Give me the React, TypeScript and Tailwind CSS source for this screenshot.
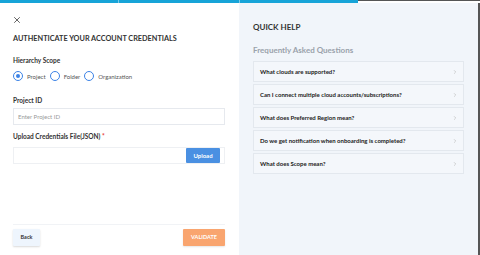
import { X, ChevronRight } from 'lucide-react';

const faqs = [
    'What clouds are supported?',
    'Can I connect multiple cloud accounts/subscriptions?',
    'What does Preferred Region mean?',
    'Do we get notification when onboarding is completed?',
    'What does Scope mean?',
];

function Radio({ label, checked }: { label: string; checked?: boolean }) {
    return (
        <label className="flex items-center gap-[4px]">
            <span className="w-[10px] h-[10px] rounded-full border-[1.5px] border-[#3b82e6] flex items-center justify-center">
                {checked && <span className="w-[4px] h-[4px] rounded-full bg-[#3b82e6]" />}
            </span>
            <span className="text-[6px] text-[#555]">{label}</span>
        </label>
    );
}

export default function App() {
    return (
        <div
            className="w-[480px] h-[255px] flex flex-col overflow-hidden bg-white"
            style={{ fontFamily: 'Lato, "Open Sans", sans-serif' }}
        >
            {/* progress bar */}
            <div className="h-[3px] flex shrink-0">
                <div className="w-[118px] bg-[#17a4d8]" />
                <div className="w-[1px] bg-[#7cc9e8]" />
                <div className="w-[120px] bg-[#17a4d8]" />
                <div className="w-[1px] bg-[#7cc9e8]" />
                <div className="w-[118px] bg-[#17a4d8]" />
                <div className="flex-1 border-t border-[#555] bg-white" />
            </div>

            <div className="flex flex-1 min-h-0">
                {/* left panel */}
                <div className="w-[239px] flex flex-col px-[13px] pb-[9px] text-[#333]">
                    <X className="mt-[12px] w-[10px] h-[10px] -ml-[1px] text-[#444]" strokeWidth={2} />
                    <h1 className="mt-[9px] text-[7.3px] leading-[10px] font-bold text-[#333]">
                        AUTHENTICATE YOUR ACCOUNT CREDENTIALS
                    </h1>
                    <div className="mt-[12px] text-[6.5px] leading-[10px] font-bold">Hierarchy Scope</div>
                    <div className="mt-[5px] flex items-center gap-[4px]">
                        <Radio label="Project" checked />
                        <Radio label="Folder" />
                        <Radio label="Organization" />
                    </div>
                    <div className="mt-[15px] text-[6.5px] leading-[10px] font-bold">Project ID</div>
                    <input
                        placeholder="Enter Project ID"
                        className="mt-[2px] w-[212px] h-[17px] border border-[#e6e9ee] px-[4px] text-[6px] placeholder-[#999] outline-none"
                    />
                    <div className="mt-[7px] text-[6.5px] leading-[10px] font-bold">
                        Upload Credentials File(JSON) <span className="text-[#e53935]">*</span>
                    </div>
                    <div className="mt-[5px] w-[212px] h-[17px] border border-[#eef0f3] flex justify-between pr-[4px]">
                        <div className="flex-1" />
                        <button className="w-[34px] h-full bg-[#4a90e2] text-white text-[6px] font-bold rounded-[1px]">
                            Upload
                        </button>
                    </div>

                    <div className="mt-auto w-[212px] border-t border-[#f1f3f6]" />
                    <div className="mt-[4px] w-[212px] flex justify-between">
                        <button className="w-[27px] h-[17px] bg-[#eef5fd] text-[#333] text-[5.5px] font-bold shadow-[0_1px_2px_rgba(0,0,0,0.15)] rounded-[1px]">
                            Back
                        </button>
                        <button className="w-[42px] h-[17px] bg-[#f9a56f] text-white text-[5.5px] font-bold shadow-[0_1px_2px_rgba(0,0,0,0.1)] rounded-[1px]">
                            VALIDATE
                        </button>
                    </div>
                </div>

                {/* right panel */}
                <div className="flex-1 bg-[#f1f5fa] px-[14px]">
                    <h2 className="mt-[19px] text-[8px] leading-[10px] font-bold text-[#333]">QUICK HELP</h2>
                    <h3 className="mt-[13px] text-[8px] leading-[10px] font-bold text-[#9aa2ab]">
                        Frequently Asked Questions
                    </h3>
                    <div className="mt-[6px] flex flex-col gap-[2px]">
                        {faqs.map((q) => (
                            <div
                                key={q}
                                className="h-[21px] bg-[#f4f7fb] border border-[#e3e8ee] flex items-center justify-between pl-[6px] pr-[5px]"
                            >
                                <span className="text-[6px] font-bold text-[#222]">{q}</span>
                                <ChevronRight className="w-[6px] h-[6px] text-[#aaa]" strokeWidth={2} />
                            </div>
                        ))}
                    </div>
                </div>
                <div className="w-[2px] bg-[#555]" />
            </div>
        </div>
    );
}
